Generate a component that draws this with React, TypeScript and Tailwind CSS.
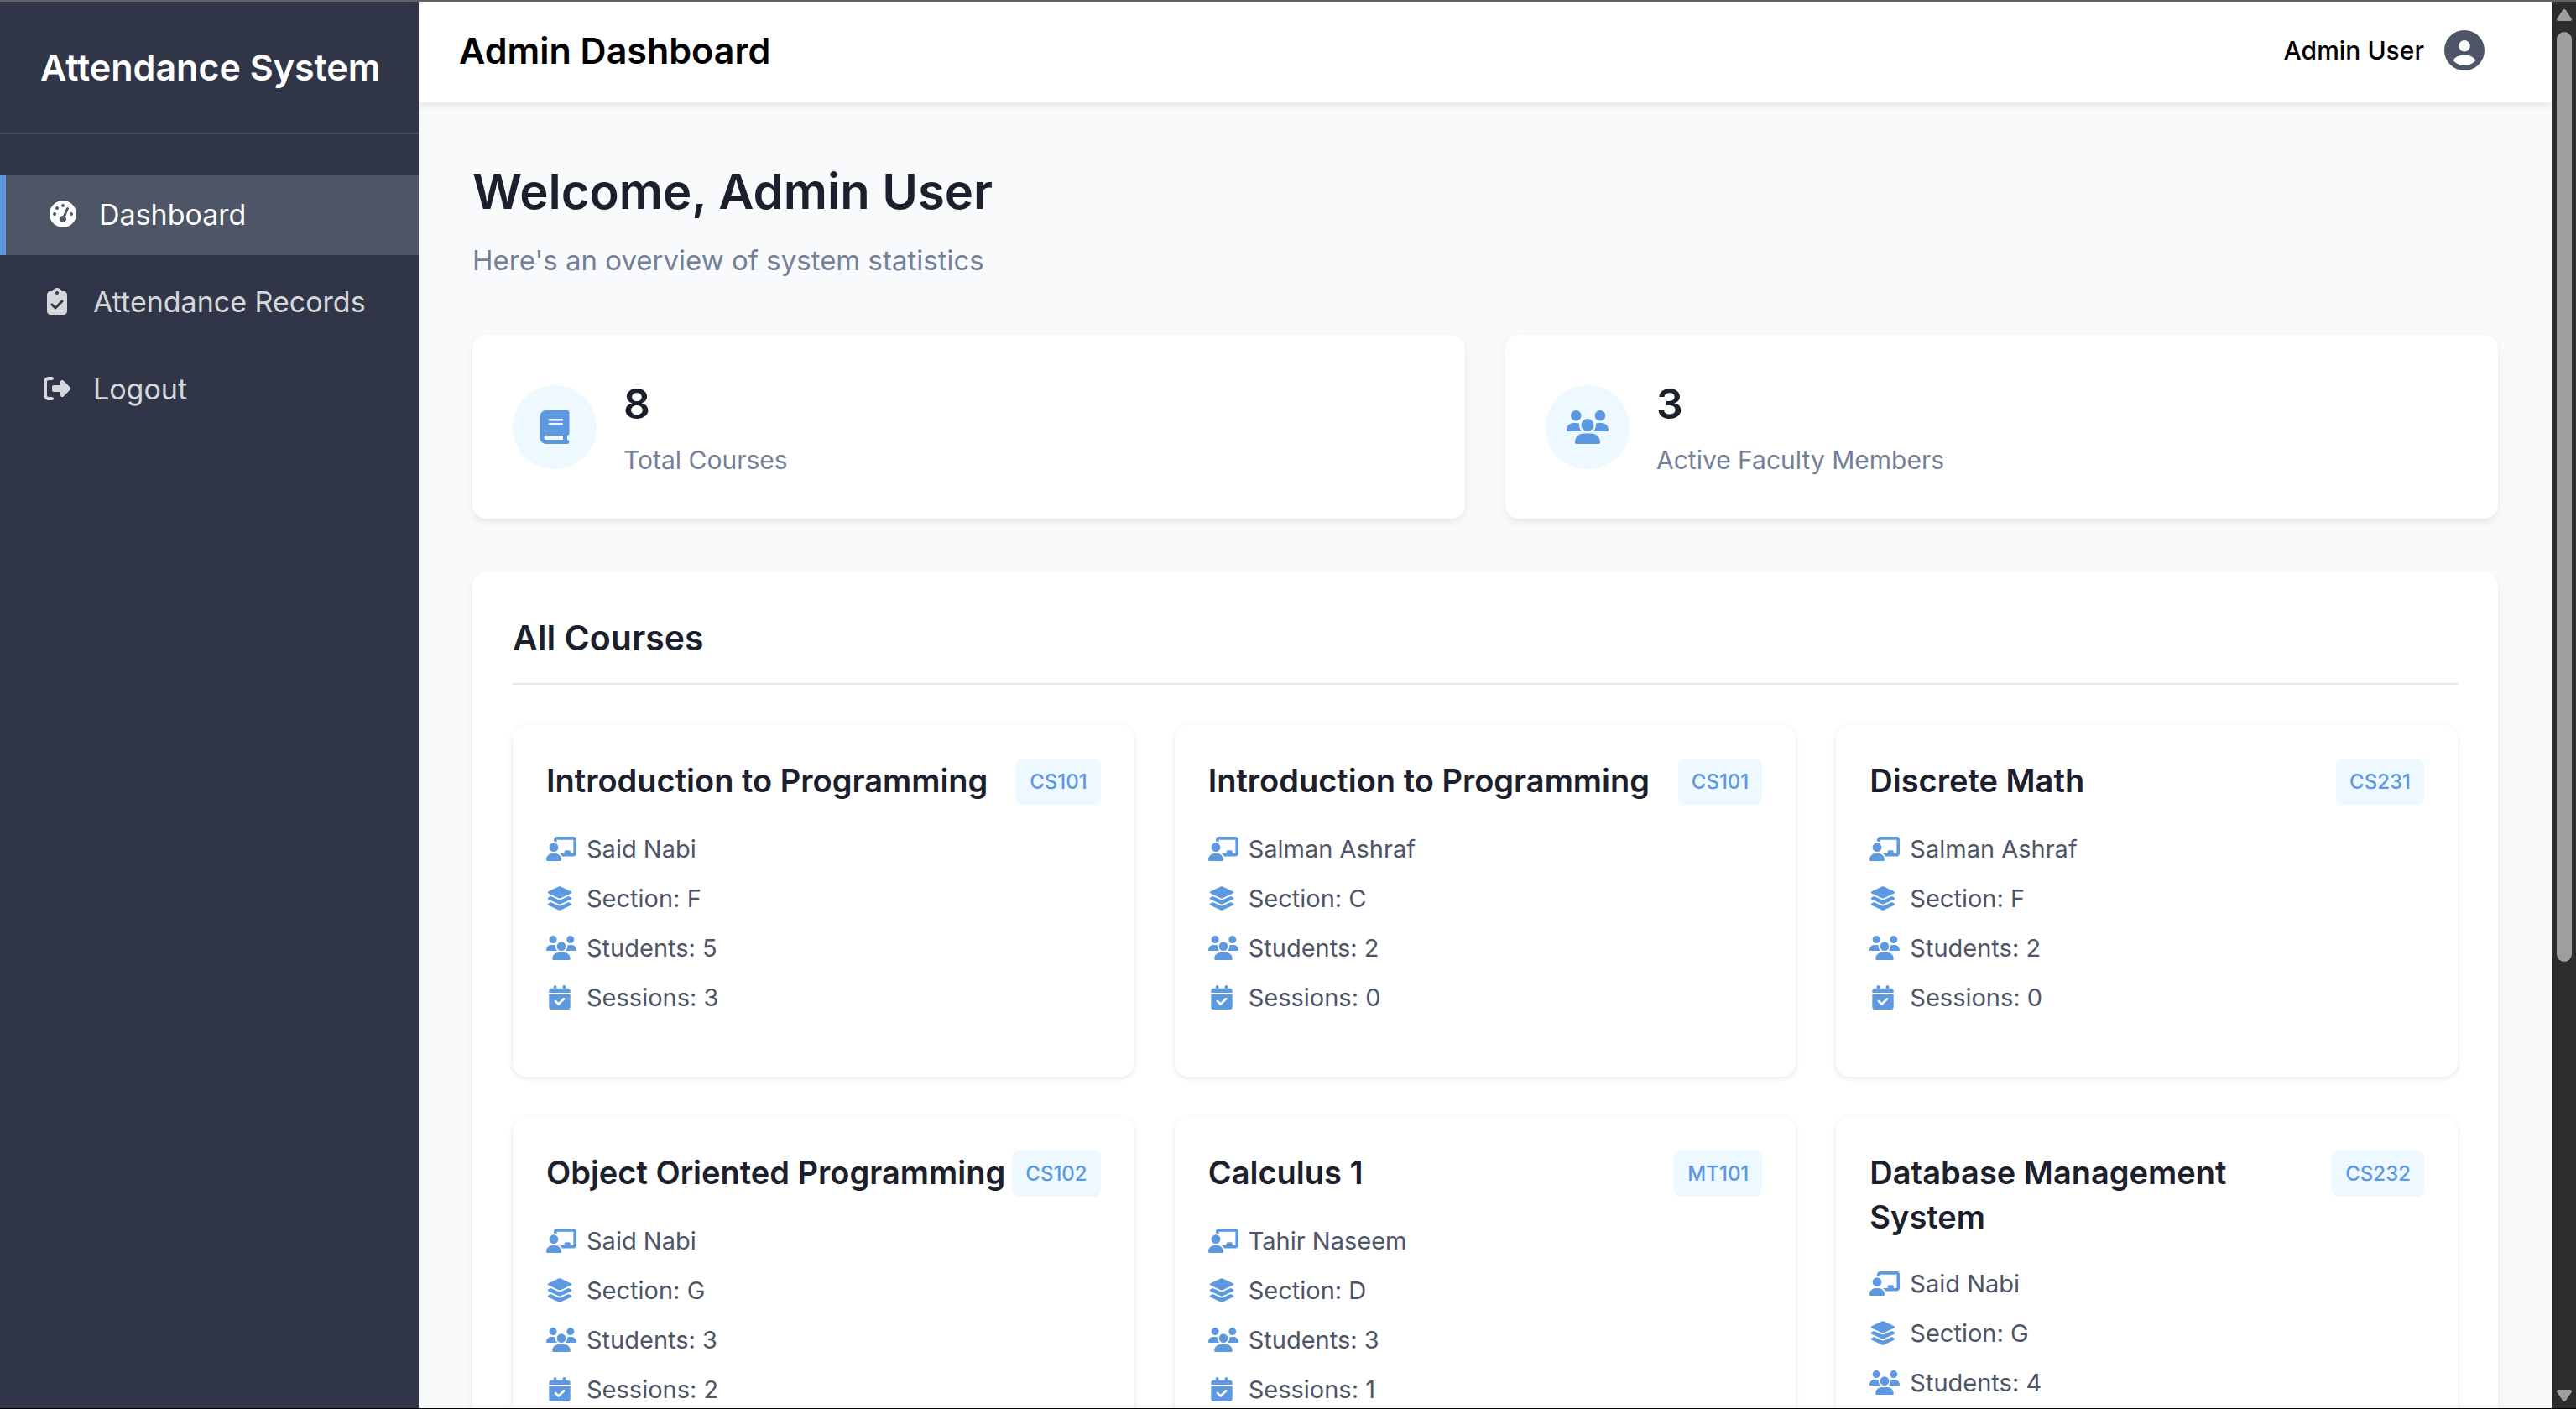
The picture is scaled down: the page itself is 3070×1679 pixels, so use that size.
import type { ComponentType } from 'react';
import {
  FaBook,
  FaCalendarCheck,
  FaChalkboardUser,
  FaCircleUser,
  FaClipboardCheck,
  FaGaugeHigh,
  FaLayerGroup,
  FaRightFromBracket,
  FaUsers,
} from 'react-icons/fa6';

type Icon = ComponentType<{ className?: string }>;

const NAV: { label: string; icon: Icon; active?: boolean }[] = [
  { label: 'Dashboard', icon: FaGaugeHigh, active: true },
  { label: 'Attendance Records', icon: FaClipboardCheck },
  { label: 'Logout', icon: FaRightFromBracket },
];

const STATS: { value: number; label: string; icon: Icon }[] = [
  { value: 8, label: 'Total Courses', icon: FaBook },
  { value: 3, label: 'Active Faculty Members', icon: FaUsers },
];

const COURSES = [
  { title: 'Introduction to Programming', code: 'CS101', teacher: 'Said Nabi', section: 'F', students: 5, sessions: 3 },
  { title: 'Introduction to Programming', code: 'CS101', teacher: 'Salman Ashraf', section: 'C', students: 2, sessions: 0 },
  { title: 'Discrete Math', code: 'CS231', teacher: 'Salman Ashraf', section: 'F', students: 2, sessions: 0 },
  { title: 'Object Oriented Programming', code: 'CS102', teacher: 'Said Nabi', section: 'G', students: 3, sessions: 2 },
  { title: 'Calculus 1', code: 'MT101', teacher: 'Tahir Naseem', section: 'D', students: 3, sessions: 1 },
  { title: 'Database Management\nSystem', code: 'CS232', teacher: 'Said Nabi', section: 'G', students: 4, sessions: 2 },
];

function Sidebar() {
  return (
    <aside className="flex w-[499px] shrink-0 flex-col bg-[#303648]">
      <div className="border-b-2 border-white/10 px-12 py-12">
        <div className="text-[43px]/[60px] font-semibold whitespace-nowrap text-white">Attendance System</div>
      </div>
      <nav className="flex flex-col gap-2 pt-12">
        {NAV.map(({ label, icon: NavIcon, active }) => (
          <a
            key={label}
            href="#"
            className={
              active
                ? 'flex h-24 items-center gap-6 border-l-[7px] border-[#5d99e1] bg-[#4d5567] px-12 pb-0.5 text-[34px] text-white'
                : 'flex h-24 items-center gap-6 px-12 pb-0.5 text-[34px] text-[#d6d7da]'
            }
          >
            <span className="flex w-[39px] shrink-0 justify-center">
              <NavIcon className="size-8" />
            </span>
            <span className="whitespace-nowrap">{label}</span>
          </a>
        ))}
      </nav>
    </aside>
  );
}

function StatCard({ value, label, icon: StatIcon }: { value: number; label: string; icon: Icon }) {
  return (
    <div className="flex items-center gap-8 rounded-2xl bg-white p-12 shadow-[0_4px_8px_rgba(0,0,0,0.08)]">
      <div className="flex size-[100px] items-center justify-center rounded-full bg-[#edf8ff] text-[#5d99e1]">
        <StatIcon className="h-10 w-[50px]" />
      </div>
      <div>
        <div className="text-[50px]/[68px] font-semibold text-[#1c202c]">{value}</div>
        <div className="mt-3 text-[30px]/[43px] text-[#747f98]">{label}</div>
      </div>
    </div>
  );
}

function InfoRow({ icon: RowIcon, text, wide }: { icon: Icon; text: string; wide?: boolean }) {
  return (
    <li className="flex items-center gap-3">
      <span className="w-9 shrink-0 text-[#5d99e1]">
        <RowIcon className={wide ? 'h-[29px] w-9' : 'h-[29px] w-8'} />
      </span>
      <span>{text}</span>
    </li>
  );
}

function CourseCard({ course }: { course: (typeof COURSES)[number] }) {
  return (
    <article className="rounded-2xl bg-white p-10 pb-[73px] shadow-[0_2px_6px_rgba(0,0,0,0.1)]">
      <div className="flex items-start justify-between">
        <h3 className="text-[38px]/[53px] font-semibold whitespace-pre-line text-[#1c202c]">{course.title}</h3>
        <span className="shrink-0 rounded-lg bg-[#edf8ff] px-4 text-[24px]/[55px] font-medium text-[#5d99e1]">
          {course.code}
        </span>
      </div>
      <ul className="mt-[31px] flex flex-col gap-4 text-[29px]/[43px] text-[#4d5567]">
        <InfoRow icon={FaChalkboardUser} text={course.teacher} wide />
        <InfoRow icon={FaLayerGroup} text={`Section: ${course.section}`} />
        <InfoRow icon={FaUsers} text={`Students: ${course.students}`} wide />
        <InfoRow icon={FaCalendarCheck} text={`Sessions: ${course.sessions}`} />
      </ul>
    </article>
  );
}

function Scrollbar() {
  return (
    <div className="flex w-[29px] shrink-0 flex-col items-center bg-[#2c2c2c] pt-[9px] pb-2 text-[#9f9f9f]">
      <svg viewBox="0 0 18 14" className="h-[14px] w-[18px]" fill="currentColor">
        <path d="M7 1.2Q9-1 11 1.2L17.6 11Q18.6 14 16 14H2Q-.6 14 .4 11Z" />
      </svg>
      <div className="mt-[13px] flex w-[18px] grow flex-col">
        <div className="flex-[137] rounded-full bg-[#9f9f9f]" />
        <div className="flex-[63]" />
      </div>
      <svg viewBox="0 0 18 14" className="h-[14px] w-[18px]" fill="currentColor">
        <path d="M7 12.8Q9 15 11 12.8L17.6 3Q18.6 0 16 0H2Q-.6 0 .4 3Z" />
      </svg>
    </div>
  );
}

export default function App() {
  return (
    <div className="flex h-screen overflow-hidden border-t-2 border-b border-t-[#636363] border-b-black bg-[#f9fafc] font-[Inter,sans-serif]">
      <Sidebar />
      <div className="flex min-w-0 grow flex-col">
        <header className="z-10 flex h-[120px] shrink-0 items-center justify-between bg-white pr-20 pb-1 pl-12 shadow-[0_4px_8px_rgba(0,0,0,0.08)]">
          <h1 className="text-[43px] font-semibold text-black">Admin Dashboard</h1>
          <div className="flex items-center gap-6">
            <span className="text-[30px] font-medium text-black">Admin User</span>
            <FaCircleUser className="size-12 text-[#4d5567]" />
          </div>
        </header>
        <main className="min-h-0 grow overflow-hidden p-16">
          <h2 className="text-[58px]/[84px] font-semibold text-[#1c202c]">Welcome, Admin User</h2>
          <p className="mt-4 text-[33px]/[48px] text-[#747f98]">Here's an overview of system statistics</p>
          <section className="mt-[65px] grid grid-cols-2 gap-12">
            {STATS.map((stat) => (
              <StatCard key={stat.label} {...stat} />
            ))}
          </section>
          <section className="mt-16 rounded-2xl bg-white p-12 shadow-[0_4px_8px_rgba(0,0,0,0.08)]">
            <h2 className="border-b-2 border-[#e3e8ef] pb-6 text-[41px]/[60px] font-semibold text-[#1c202c]">
              All Courses
            </h2>
            <div className="mt-12 grid grid-cols-3 gap-12">
              {COURSES.map((course, i) => (
                <CourseCard key={i} course={course} />
              ))}
            </div>
          </section>
        </main>
      </div>
      <Scrollbar />
    </div>
  );
}
